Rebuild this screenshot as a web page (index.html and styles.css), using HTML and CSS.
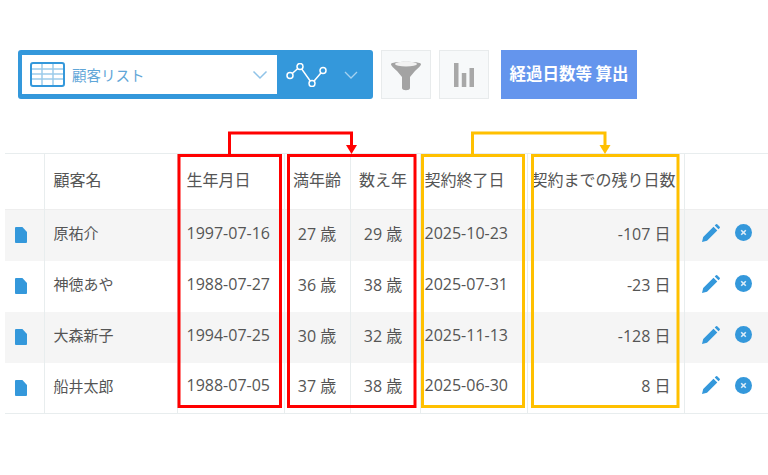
FILE: index.html
```html
<!DOCTYPE html>
<html lang="ja">
<head>
  <meta charset="UTF-8">
  <title>顧客リスト</title>
  <link rel="stylesheet" href="styles.css">
</head>
<body>
  <div class="toolbar">
    <div class="view-picker">
      <div class="view-select">
        <svg class="table-icon" width="35" height="25" viewBox="0 0 35 25">
          <rect x="1" y="1" width="33" height="23" rx="2" fill="#fff" stroke="#3498db" stroke-width="2"/>
          <path d="M2 7h31M2 12h31M2 17h31M12 2v21M23 2v21" stroke="#9ccbea" stroke-width="1.5" fill="none"/>
        </svg>
        <span class="view-name">顧客リスト</span>
        <svg class="chevron" width="16" height="10" viewBox="0 0 16 10"><path d="M1.5 1.5 8 8l6.500-6.500" fill="none" stroke="#8fc3e8" stroke-width="1.500"/></svg>
      </div>
      <svg class="graph-icon" width="42" height="24" viewBox="0 0 42 24">
        <path d="M5 12.500 15 3.500 27 20.500 38 7.500" fill="none" stroke="#fff" stroke-width="1.500"/>
        <circle cx="5" cy="12.500" r="3" fill="#3498db" stroke="#fff" stroke-width="1.500"/>
        <circle cx="15" cy="3.500" r="3" fill="#3498db" stroke="#fff" stroke-width="1.500"/>
        <circle cx="27" cy="20.500" r="3" fill="#3498db" stroke="#fff" stroke-width="1.500"/>
        <circle cx="38" cy="7.500" r="3" fill="#3498db" stroke="#fff" stroke-width="1.500"/>
      </svg>
      <svg class="chevron-light" width="16" height="10" viewBox="0 0 16 10"><path d="M2 2l6 6 6-6" fill="none" stroke="#a5d2f0" stroke-width="1.300"/></svg>
    </div>
    <button class="tool-btn">
      <svg width="30" height="32" viewBox="0 0 30 32">
        <path d="M0 5c0-3 30-3 30 0 0 2-3 4-6 7l-5 6v11c0 3-8 3-8 0V18l-5-6C3 9 0 7 0 5z" fill="#a3a3a3"/>
        <ellipse cx="15" cy="5" rx="11" ry="2.500" fill="#f2f2f2"/>
      </svg>
    </button>
    <button class="tool-btn">
      <svg width="20" height="24" viewBox="0 0 20 24">
        <path d="M0 0h4.500v24H0zM7.800 10h4.500v14H7.800zM15.500 5H20v19h-4.500z" fill="#a8a8a8"/>
      </svg>
    </button>
    <button class="calc-btn">経過日数等 算出</button>
  </div>

  <div class="table-wrap">
    <table class="customers">
      <thead>
        <tr>
          <th class="col-icon"></th>
          <th class="col-name">顧客名</th>
          <th class="col-birth">生年月日</th>
          <th class="col-age">満年齢</th>
          <th class="col-kazoe">数え年</th>
          <th class="col-end">契約終了日</th>
          <th class="col-left">契約までの残り日数</th>
          <th class="col-actions"></th>
        </tr>
      </thead>
      <tbody>
        <tr>
          <td class="cell-icon"><svg class="doc" width="12" height="16" viewBox="0 0 13 16" preserveAspectRatio="none"><path d="M0 1q0-1 1-1h7l5 5v10q0 1-1 1H1q-1 0-1-1z" fill="#3498db"/></svg></td>
          <td class="cell-name">原祐介</td><td>1997-07-16</td><td class="center">27 歳</td><td class="center kazoe">29 歳</td><td>2025-10-23</td><td class="right">-107 日</td>
          <td class="cell-actions">
            <svg width="18" height="18" viewBox="0 0 18 18"><path d="M0 18l1.200-5L11.500 2.700l3.800 3.800L5 16.800zM12.700 1.500 14 .3q.6-.5 1.200 0l2.500 2.500q.5.600 0 1.200l-1.200 1.300z" fill="#3498db"/></svg>
            <svg width="17" height="17" viewBox="0 0 17 17"><circle cx="8.500" cy="8.500" r="8.500" fill="#3498db"/><path d="M6.200 6.200l4.600 4.600M10.800 6.200l-4.600 4.600" stroke="#dcecf8" stroke-width="1.600"/></svg>
          </td>
        </tr>
        <tr>
          <td class="cell-icon"><svg class="doc" width="12" height="16" viewBox="0 0 13 16" preserveAspectRatio="none"><path d="M0 1q0-1 1-1h7l5 5v10q0 1-1 1H1q-1 0-1-1z" fill="#3498db"/></svg></td>
          <td class="cell-name">神徳あや</td><td>1988-07-27</td><td class="center">36 歳</td><td class="center kazoe">38 歳</td><td>2025-07-31</td><td class="right">-23 日</td>
          <td class="cell-actions">
            <svg width="18" height="18" viewBox="0 0 18 18"><path d="M0 18l1.200-5L11.500 2.700l3.800 3.800L5 16.800zM12.700 1.500 14 .3q.6-.5 1.200 0l2.500 2.500q.5.600 0 1.200l-1.200 1.300z" fill="#3498db"/></svg>
            <svg width="17" height="17" viewBox="0 0 17 17"><circle cx="8.500" cy="8.500" r="8.500" fill="#3498db"/><path d="M6.200 6.200l4.600 4.600M10.800 6.200l-4.600 4.600" stroke="#dcecf8" stroke-width="1.600"/></svg>
          </td>
        </tr>
        <tr>
          <td class="cell-icon"><svg class="doc" width="12" height="16" viewBox="0 0 13 16" preserveAspectRatio="none"><path d="M0 1q0-1 1-1h7l5 5v10q0 1-1 1H1q-1 0-1-1z" fill="#3498db"/></svg></td>
          <td class="cell-name">大森新子</td><td>1994-07-25</td><td class="center">30 歳</td><td class="center kazoe">32 歳</td><td>2025-11-13</td><td class="right">-128 日</td>
          <td class="cell-actions">
            <svg width="18" height="18" viewBox="0 0 18 18"><path d="M0 18l1.200-5L11.500 2.700l3.800 3.800L5 16.800zM12.700 1.500 14 .3q.6-.5 1.200 0l2.500 2.500q.5.600 0 1.200l-1.200 1.300z" fill="#3498db"/></svg>
            <svg width="17" height="17" viewBox="0 0 17 17"><circle cx="8.500" cy="8.500" r="8.500" fill="#3498db"/><path d="M6.200 6.200l4.600 4.600M10.800 6.200l-4.600 4.600" stroke="#dcecf8" stroke-width="1.600"/></svg>
          </td>
        </tr>
        <tr>
          <td class="cell-icon"><svg class="doc" width="12" height="16" viewBox="0 0 13 16" preserveAspectRatio="none"><path d="M0 1q0-1 1-1h7l5 5v10q0 1-1 1H1q-1 0-1-1z" fill="#3498db"/></svg></td>
          <td class="cell-name">船井太郎</td><td>1988-07-05</td><td class="center">37 歳</td><td class="center kazoe">38 歳</td><td>2025-06-30</td><td class="right">8 日</td>
          <td class="cell-actions">
            <svg width="18" height="18" viewBox="0 0 18 18"><path d="M0 18l1.200-5L11.500 2.700l3.800 3.800L5 16.800zM12.700 1.500 14 .3q.6-.5 1.200 0l2.500 2.500q.5.600 0 1.200l-1.200 1.300z" fill="#3498db"/></svg>
            <svg width="17" height="17" viewBox="0 0 17 17"><circle cx="8.500" cy="8.500" r="8.500" fill="#3498db"/><path d="M6.200 6.200l4.600 4.600M10.800 6.200l-4.600 4.600" stroke="#dcecf8" stroke-width="1.600"/></svg>
          </td>
        </tr>
      </tbody>
    </table>

    <!-- annotation frames over the table -->
    <svg class="marks" width="768" height="290" viewBox="0 0 768 290">
      <g fill="none" stroke="#f00" stroke-width="3">
        <rect x="179" y="28.500" width="101.500" height="251"/>
        <rect x="288.500" y="28.500" width="126.500" height="251"/>
        <path d="M229.500 27V6H351.500V20"/>
      </g>
      <path d="M346 18h11l-5.500 9z" fill="#f00"/>
      <g fill="none" stroke="#ffc000" stroke-width="3">
        <rect x="422.500" y="28.500" width="101" height="251"/>
        <rect x="532.500" y="28.500" width="145.500" height="251"/>
        <path d="M472.500 27V6H605V20"/>
      </g>
      <path d="M599.500 18h11l-5.500 9z" fill="#ffc000"/>
    </svg>
  </div>
</body>
</html>
```

FILE: styles.css
```css
* {
  box-sizing: border-box;
}

body {
  margin: 0;
  background: #fff;
  font-family: "Open Sans", "Noto Sans CJK JP", sans-serif;
  color: #555;
  overflow: hidden;
}

.toolbar {
  display: flex;
  align-items: stretch;
  height: 49px;
  margin: 50px 0 0 18px;
}

.view-picker {
  display: flex;
  align-items: center;
  width: 355px;
  padding: 4px;
  background: #3498db;
  border-radius: 3px;
}

.view-select {
  display: flex;
  align-items: center;
  width: 255px;
  height: 39px;
  padding: 0 9px 0 8px;
  background: #fff;
}

.view-name {
  flex: 1;
  margin-left: 7px;
  font-size: 14.500px;
  color: #5fa6d8;
}

.graph-icon {
  margin-left: 8px;
}

.chevron-light {
  margin-left: 16px;
}

.tool-btn {
  display: flex;
  align-items: center;
  justify-content: center;
  width: 50px;
  margin-left: 8px;
  padding: 0;
  background: #f7f9fa;
  border: 1px solid #e8ebec;
}

.calc-btn {
  width: 136px;
  margin-left: 12px;
  padding: 0 0 3px;
  background: #6495ed;
  border: none;
  font-family: "Noto Sans CJK JP", sans-serif;
  font-size: 16.500px;
  font-weight: 700;
  color: #fff;
}

.table-wrap {
  position: relative;
  margin-top: 54px;
  padding-left: 5px;
}

.customers {
  width: 763px;
  table-layout: fixed;
  border-collapse: collapse;
  font-size: 16px;
}

.customers th,
.customers td {
  padding: 0 0 5px 9px;
  text-align: left;
  font-weight: 400;
  white-space: nowrap;
  border-left: 1px solid #e8edee;
}

.customers th:first-child,
.customers td:first-child {
  border-left: none;
}

.customers thead tr {
  height: 56px;
  border-top: 1px solid #e8edee;
  border-bottom: 1px solid #eee;
}

.customers tbody tr {
  height: 51px;
}

.customers tbody tr:nth-child(odd) {
  background: #f5f5f5;
}

.customers tbody tr:last-child {
  border-bottom: 1px solid #e8edee;
}

.col-icon { width: 39px; }
.col-name { width: 133px; }
.col-birth { width: 107px; }
.col-age { width: 66px; }
.col-kazoe { width: 70px; }
.col-end { width: 107px; }
.col-left { width: 157px; }
.col-actions { width: 84px; }

.customers .cell-name {
  font-size: 15px;
}

.customers .col-age,
.customers .center {
  text-align: center;
  padding-left: 0;
}

.customers .col-kazoe,
.customers .kazoe {
  text-align: center;
  padding: 0 4px 5px 0;
}

.customers .col-end,
.customers td:nth-child(6) {
  padding-left: 4px;
}

.customers .col-left {
  padding-left: 4px;
}

.customers .right {
  text-align: right;
  padding-right: 13px;
}

.customers .cell-icon {
  padding: 0 0 0 10px;
}

.doc {
  display: block;
}

.customers .cell-actions {
  padding: 0 0 8px 17px;
}

.cell-actions svg {
  vertical-align: middle;
  margin-right: 11px;
}

.marks {
  position: absolute;
  top: -26px;
  left: 0;
  pointer-events: none;
}
```
